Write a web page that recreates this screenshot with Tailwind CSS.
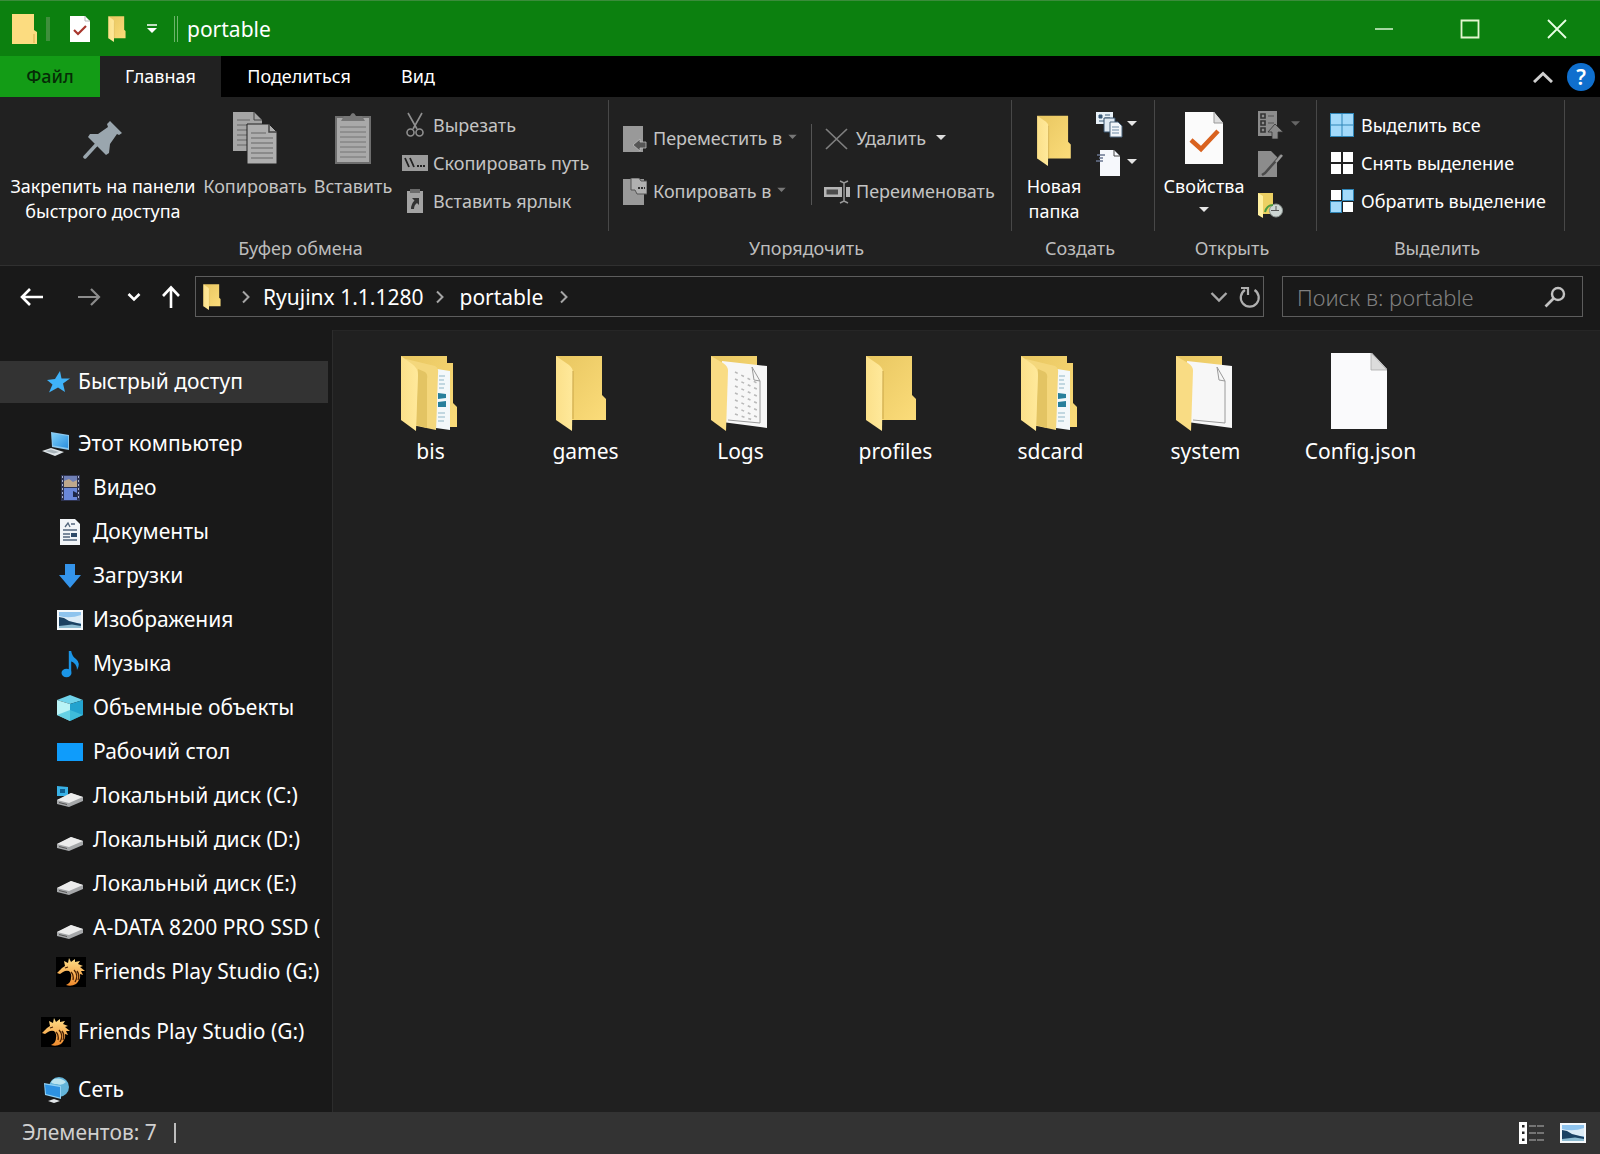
<!DOCTYPE html>
<html lang="ru">
<head>
<meta charset="utf-8">
<meta name="viewport" content="width=device-width, initial-scale=1">
<title>portable</title>
<script src="https://cdn.jsdelivr.net/npm/@tailwindcss/browser@4"></script>
</head>
<body class="flex min-h-screen flex-col overflow-x-hidden bg-[#191919] font-['Noto_Sans','Open_Sans',sans-serif] text-white">

<svg class="absolute h-0 w-0" aria-hidden="true">
  <defs>
    <linearGradient id="gBack" x1="0" y1="0" x2="1" y2="1"><stop offset="0" stop-color="#e8c660"/><stop offset="1" stop-color="#fbdc7a"/></linearGradient>
    <linearGradient id="gFront" x1="0" y1="0" x2="1" y2="0"><stop offset="0" stop-color="#fbe08a"/><stop offset="1" stop-color="#ffe99b"/></linearGradient>
    <linearGradient id="gBlue" x1="0" y1="0" x2="1" y2="1"><stop offset="0" stop-color="#7fd0f8"/><stop offset="1" stop-color="#2a8fe0"/></linearGradient>
    <linearGradient id="gDragon" x1="0" y1="0" x2="0" y2="1"><stop offset="0" stop-color="#ffe08a"/><stop offset="1" stop-color="#f08a2c"/></linearGradient>
  </defs>
  <symbol id="folder" viewBox="0 0 52 76">
    <path d="M1 1H47V40L51 44V65H1Z" fill="url(#gBack)"/>
    <path d="M1 1L14 10Q18 13 18 18L17 76L1 65Z" fill="url(#gFront)"/>
    <path d="M18 16V64" stroke="#c9a548" stroke-width="1"/>
  </symbol>
  <symbol id="folder-full" viewBox="0 0 58 76">
    <path d="M1 1H47V8H53V48L57 52V72H40L1 65Z" fill="url(#gBack)"/>
    <path d="M37 14L50 16V75L36 73Z" fill="#f3f8fa"/>
    <path d="M39 21h6M39 25h5M39 29h6M39 33h5M38 58h7M38 62h7M38 66h6" stroke="#8fb6c6" stroke-width="1.2"/>
    <path d="M38 38l8 1v4l-8 1zM38 47l8-1v6l-8 0z" fill="#277f9b"/>
    <path d="M6 4L35 11Q39 13 38 19L36 75L12 70Z" fill="#f4d77c"/>
    <path d="M18 14L25 17Q28 19 27 24V73L16 70Z" fill="#e3c463"/>
    <path d="M1 1L12 9Q18 13 18 20L16 76L1 65Z" fill="url(#gFront)"/>
  </symbol>
  <symbol id="folder-doc" viewBox="0 0 58 76">
    <path d="M1 1H47V60H1Z" fill="url(#gBack)"/>
    <path d="M12 6L57 11V73L12 67Z" fill="#f7f7f7"/>
    <path d="M42 12L50 26V68L18 65M42 12L44 25L50 26" fill="none" stroke="#9a9a9a" stroke-width="1"/>
    <path d="M1 1L13 8Q18 11 18 16L16 76L1 65Z" fill="#f9dc84"/>
  </symbol>
  <symbol id="folder-log" viewBox="0 0 58 76">
    <use href="#folder-doc"/>
    <path d="M25 17l24 12M25 24l22 10M25 31l22 10M25 38l22 10M25 45l22 10M25 52l22 10M25 59l18 6" stroke="#b9b9b9" stroke-width="1.6" stroke-dasharray="3 4"/>
  </symbol>
  <symbol id="file" viewBox="0 0 58 78">
    <path d="M1 1H42L57 17V77H1Z" fill="#fafafc"/><path d="M41 1V18H57Z" fill="#dcdcdc" stroke="#aaa" stroke-width=".8"/>
  </symbol>
  <symbol id="caret" viewBox="0 0 10 6"><path d="M0 1H10L5 6Z" fill="currentColor"/></symbol>
  <symbol id="chev-r" viewBox="0 0 10 14"><path d="M2 1.5L7.500 7L2 12.500" fill="none" stroke="currentColor" stroke-width="2"/></symbol>
  <symbol id="chev-d" viewBox="0 0 18 12"><path d="M1.500 2L9 9.500L16.500 2" fill="none" stroke="currentColor" stroke-width="2.400"/></symbol>
  <symbol id="drive" viewBox="0 0 28 22">
    <path d="M1 15L15 8L27 12V16L13 22L1 19Z" fill="#a5a7a9"/><path d="M1 15L15 8L27 12L13 18Z" fill="#ececec"/><path d="M3 17.500l8 2" stroke="#555" stroke-width="1"/>
  </symbol>
  <symbol id="dragon" viewBox="0 0 30 30">
    <path d="M0 0H30V30H0Z" fill="#000"/>
    <path d="M1 16L6 11L9 9L8 4L12 6L13 1L15 5L19 2L19 5L24 4L22 7L27 9L24 10L29 14L25 14L27 18L24 17Q25 22 20 27Q15 30 10 28Q15 26 15 21Q16 17 13 14Q10 13 7 15L4 17Z" fill="url(#gDragon)"/>
    <path d="M9 11l3-1M18 13q5 5 1 12M21 14q3 4 1 9M15 15q3 3 2 8" stroke="#4a2206" stroke-width="1.300" fill="none"/>
  </symbol>
  <symbol id="picture" viewBox="0 0 28 22">
    <path d="M1 1H27V21H1Z" fill="#f4f8fb"/><path d="M3 3H25V19H3Z" fill="#8fc4ee"/><path d="M3 7Q14 10 25 6V14L3 16Z" fill="#dcecf7"/><path d="M3 8L8 9L13 12L25 15V17H3Z" fill="#1b4263"/><path d="M3 17L16 15.500L25 17V19H3Z" fill="#8dbcd2"/>
  </symbol>
</svg>

<header class="flex h-14 items-center border-t border-[#3b8c3b] bg-[#0c800f]">
  <div class="flex flex-1 items-center pl-3">
    <svg class="h-[30px] w-[26px]" viewBox="0 0 26 30"><path d="M0 0H22V16L25 18V30H0Z" fill="#fcdc80"/><path d="M22 20V29" stroke="#d9b04c"/></svg>
    <span class="ml-2 h-6 w-1 bg-[#3f8f3c]"></span>
    <button type="button" class="ml-5 block" aria-label="Свойства"><svg class="h-[26px] w-5" viewBox="0 0 20 26"><path d="M0 0H15L20 5V26H0Z" fill="#fff"/><path d="M15 0V5H20" fill="none" stroke="#b5b5b5"/><path d="M4 14L8 18L16 10" fill="none" stroke="#a8352c" stroke-width="2.200"/></svg></button>
    <button type="button" class="ml-[18px] block" aria-label="Новая папка"><svg class="h-[26px] w-[18px]"><use href="#folder"/></svg></button>
    <button type="button" class="ml-5 block" aria-label="Настройка панели быстрого доступа"><svg class="h-3 w-3" viewBox="0 0 12 12"><path d="M1 2H11" stroke="#fff" stroke-width="1.500"/><path d="M1 5H11L6 10Z" fill="#fff"/></svg></button>
    <span class="ml-4 h-[26px] w-1 border-x border-[#6db56b]"></span>
    <h1 class="ml-[9px] text-[21px] leading-7">portable</h1>
  </div>
  <button type="button" class="flex h-full w-[87px] items-center justify-center" aria-label="Свернуть"><svg class="h-5 w-5" viewBox="0 0 20 20"><path d="M1 10H19" stroke="#d9f5d3" stroke-width="1.500"/></svg></button>
  <button type="button" class="flex h-full w-[86px] items-center justify-center" aria-label="Развернуть"><svg class="h-5 w-5" viewBox="0 0 20 20"><path d="M1.500 1.500H18.500V18.500H1.500Z" fill="none" stroke="#e3f5cf" stroke-width="1.800"/></svg></button>
  <button type="button" class="flex h-full w-[87px] items-center justify-center" aria-label="Закрыть"><svg class="h-5 w-5" viewBox="0 0 20 20"><path d="M1 1L19 19M19 1L1 19" stroke="#e8ffe4" stroke-width="1.800"/></svg></button>
</header>

<nav class="flex h-[41px] items-center bg-black text-[18px]" aria-label="Вкладки ленты">
  <button type="button" class="h-full w-[100px] bg-[#139c16] font-medium text-[#062b06]">Файл</button>
  <button type="button" class="h-full w-[121px] bg-[#212121]">Главная</button>
  <button type="button" class="h-full w-[156px]">Поделиться</button>
  <button type="button" class="h-full w-[82px]">Вид</button>
  <button type="button" class="ml-auto" aria-label="Свернуть ленту"><svg class="h-3 w-5" viewBox="0 0 20 12"><path d="M1 11L10 2.500L19 11" fill="none" stroke="#cfcfcf" stroke-width="3"/></svg></button>
  <button type="button" class="mr-[5px] ml-[14px] h-7 w-7 rounded-full bg-[#0f6fce] text-[21px] leading-7 font-semibold" aria-label="Справка">?</button>
</nav>

<section class="flex h-[169px] border-b border-[#303030] bg-[#212121] text-[18px] whitespace-nowrap" aria-label="Лента">
  <!-- Буфер обмена -->
  <div class="flex w-[609px] shrink-0 flex-col">
    <div class="mt-[3px] flex h-[131px] border-r border-[#484848] pl-2">
      <button type="button" class="flex w-[190px] flex-col items-center pt-3">
        <span class="flex h-14 items-center"><svg class="h-10 w-10" viewBox="0 0 40 40"><path d="M27 1L39 13L36 15L34 14L27 24L26 33L23 35L5 17L7 14L15 14L25 7L24 4Z" fill="#9aa6ae"/><path d="M13 25L2 37" stroke="#9aa6ae" stroke-width="3.500" stroke-linecap="round"/></svg></span>
        <span class="mt-[6px] leading-[25px]">Закрепить на панели<br>быстрого доступа</span>
      </button>
      <button type="button" class="flex w-[114px] flex-col items-center pt-3 text-[#c4c4c4]">
        <span class="flex h-14 items-center pb-1"><svg class="h-[52px] w-11" viewBox="0 0 44 52"><path d="M0 0H21L29 8V39H0Z" fill="#a5a5a5"/><path d="M21 0V8H29" fill="none" stroke="#444"/><path d="M4 8H17M4 13H25M4 18H25M4 23H25M4 28H25M4 33H25" stroke="#666"/><path d="M14 12H36L44 20V52H14Z" fill="#aeaeae" stroke="#212121"/><path d="M36 12V20H44" fill="none" stroke="#444" stroke-width="1.500"/><path d="M18 21H33M18 26H40M18 31H40M18 36H40M18 41H40M18 46H40" stroke="#666"/></svg></span>
        <span class="mt-[6px] leading-[25px]">Копировать</span>
      </button>
      <button type="button" class="flex w-[82px] flex-col items-center pt-3 text-[#c4c4c4]">
        <span class="flex h-14 items-center pb-1"><svg class="h-[52px] w-9" viewBox="0 0 36 52"><path d="M1 5H35V51H1Z" fill="#a9a9a9" stroke="#6e6e6e" stroke-width="2"/><path d="M6 9L9 4H15Q18 -2 21 4H27L30 9Z" fill="#777"/><path d="M5 15H31M5 20H31M5 25H31M5 30H31M5 35H31M5 40H31M5 45H31" stroke="#757575"/></svg></span>
        <span class="mt-[6px] leading-[25px]">Вставить</span>
      </button>
      <div class="flex flex-col pt-[6px] pl-2 text-[#c4c4c4]">
        <button type="button" class="flex h-[38px] items-center gap-[5px]"><svg class="h-[26px] w-[26px]" viewBox="0 0 26 26" fill="none" stroke="#8f8f8f" stroke-width="1.600"><path d="M6 1L15 17M20 1L11 17"/><circle cx="8.500" cy="20.500" r="3.500"/><circle cx="17.500" cy="20.500" r="3.500"/></svg>Вырезать</button>
        <button type="button" class="flex h-[38px] items-center gap-[5px]"><svg class="h-4 w-[26px]" viewBox="0 0 26 16"><path d="M0 0H26V16H0Z" fill="#9b9b9b"/><path d="M3 3L7 12M8 3L12 12" stroke="#222" stroke-width="1.800"/><path d="M15 11H23" stroke="#222" stroke-width="2" stroke-dasharray="2 1"/></svg>Скопировать путь</button>
        <button type="button" class="flex h-[38px] items-center gap-[5px]"><svg class="h-6 w-[26px]" viewBox="0 0 26 24"><path d="M5 2H21V24H5Z" fill="#a3a3a3"/><path d="M8 0H18V4H8Z" fill="#6b6b6b"/><path d="M10 9H17V16L15 14Q12 16 12 20H9Q9 15 12.500 11.500Z" fill="#333"/></svg>Вставить ярлык</button>
      </div>
    </div>
    <h2 class="pr-2 text-center leading-[34px] text-[#bdbdbd]">Буфер обмена</h2>
  </div>
  <!-- Упорядочить -->
  <div class="flex w-[403px] shrink-0 flex-col">
    <div class="mt-[3px] flex h-[131px] border-r border-[#484848] pt-3 pl-[14px] text-[#c4c4c4]">
      <div class="flex w-[188px] shrink-0 flex-col">
        <button type="button" class="flex h-[53px] items-center gap-[6px]"><svg class="h-[26px] w-6" viewBox="0 0 24 26"><path d="M0 0H20V26H0Z" fill="#999"/><path d="M10 19L17 13V16H23V22H17V25Z" fill="#555" stroke="#bbb" stroke-width=".8"/></svg>Переместить в<svg class="mb-1 h-[5px] w-[9px] text-[#777]"><use href="#caret"/></svg></button>
        <button type="button" class="flex h-[53px] items-center gap-[6px]"><svg class="h-[27px] w-6" viewBox="0 0 24 27"><path d="M0 1H21V27H0Z" fill="#999"/><path d="M8 0H16L18 3H24V16H14L12 12H8Z" fill="#b0b0b0" stroke="#555"/><path d="M15 10H22" stroke="#333" stroke-width="2" stroke-dasharray="2 1"/></svg>Копировать в<svg class="mb-1 h-[5px] w-[9px] text-[#777]"><use href="#caret"/></svg></button>
      </div>
      <div class="mt-3 h-[81px] w-px bg-[#555]"></div>
      <div class="flex flex-col pl-3">
        <button type="button" class="flex h-[53px] items-center gap-[6px]"><svg class="h-[22px] w-[26px]" viewBox="0 0 26 22"><path d="M2 1L23 21M23 1L2 21" stroke="#7f7f7f" stroke-width="1.700"/></svg>Удалить<svg class="mb-1 ml-1 h-[6px] w-[10px] text-[#ddd]"><use href="#caret"/></svg></button>
        <button type="button" class="flex h-[53px] items-center gap-[6px]"><svg class="h-6 w-[26px]" viewBox="0 0 26 24"><path d="M0 7H18V17H0Z" fill="#b5b5b5"/><path d="M2.500 9.500H14V14.500H2.500Z" fill="#4d4d4d"/><path d="M22 7H26V17H22Z" fill="#b5b5b5"/><path d="M16 1L20 3L24 1M20 3V21M16 23L20 21L24 23" fill="none" stroke="#999" stroke-width="1.500"/></svg>Переименовать</button>
      </div>
    </div>
    <h2 class="pr-2 text-center leading-[34px] text-[#bdbdbd]">Упорядочить</h2>
  </div>
  <!-- Создать -->
  <div class="flex w-[143px] shrink-0 flex-col">
    <div class="mt-[3px] flex h-[131px] border-r border-[#484848]">
      <button type="button" class="flex w-[84px] flex-col items-center pt-3">
        <span class="flex h-14 items-center"><svg class="h-[51px] w-9"><use href="#folder"/></svg></span>
        <span class="mt-[6px] leading-[25px]">Новая<br>папка</span>
      </button>
      <div class="flex flex-col pt-[6px]">
        <button type="button" class="flex h-[38px] items-center gap-1" aria-label="Создать элемент"><svg class="h-[26px] w-[27px]" viewBox="0 0 27 26"><path d="M0 0H17V12H0Z" fill="#e8f1f8"/><path d="M3 3h3v3h-3zM9 3h5M9 6h5M3 9h9" stroke="#3b5a78" fill="#3b5a78"/><path d="M8 6H19V20H8Z" fill="#dfe9f2" stroke="#35516b"/><path d="M14 10H22L26 14V25H14Z" fill="#f2f6fa" stroke="#4b657d"/><path d="M16 15h7M16 18h7M16 21h7" stroke="#6f8ba5"/></svg><svg class="mb-1 h-[6px] w-[10px] text-[#e5e5e5]"><use href="#caret"/></svg></button>
        <button type="button" class="flex h-[38px] items-center gap-1" aria-label="Простой доступ"><svg class="h-[26px] w-[27px]" viewBox="0 0 27 26"><path d="M4 0H18L24 6V26H4Z" fill="#f6f8fc"/><path d="M18 0V6H24" fill="none" stroke="#444"/><path d="M1 5H9M3 8H7M0 11H7" stroke="#6a7590" stroke-width="1.500"/></svg><svg class="mb-1 h-[6px] w-[10px] text-[#e5e5e5]"><use href="#caret"/></svg></button>
      </div>
    </div>
    <h2 class="pl-px text-center leading-[34px] text-[#bdbdbd] pr-2">Создать</h2>
  </div>
  <!-- Открыть -->
  <div class="flex w-[162px] shrink-0 flex-col">
    <div class="mt-[3px] flex h-[131px] border-r border-[#484848]">
      <button type="button" class="flex w-[98px] flex-col items-center pt-3">
        <span class="flex h-14 items-center pb-1"><svg class="h-[52px] w-10" viewBox="0 0 40 52"><path d="M1 0H30L39 11V52H1Z" fill="#fbfbfb"/><path d="M30 0V11H39" fill="#ddd" stroke="#999"/><path d="M7 28L17 37L34 19" fill="none" stroke="#d9621f" stroke-width="4.500"/></svg></span>
        <span class="mt-[6px] leading-[25px]">Свойства</span>
        <svg class="mt-[7px] h-[6px] w-[10px] text-[#e5e5e5]"><use href="#caret"/></svg>
      </button>
      <div class="flex flex-col pt-[6px] pl-1">
        <button type="button" class="flex h-[38px] items-center gap-2" aria-label="Открыть"><svg class="h-7 w-[26px]" viewBox="0 0 26 28"><path d="M1 0H20V25H1Z" fill="#8c8c8c"/><path d="M4 3h4v4h-4zM4 10h4v4h-4zM4 17h4v4h-4z" fill="#8c8c8c" stroke="#333" stroke-width="1.600"/><path d="M11 5h6M11 12h6" stroke="#555"/><path d="M18 13L26 21H21V28H15V21H11Z" fill="#8a8a8a" stroke="#333" stroke-width=".8"/></svg><svg class="mb-1 h-[6px] w-[9px] text-[#666]"><use href="#caret"/></svg></button>
        <button type="button" class="flex h-10 items-center" aria-label="Изменить"><svg class="h-[26px] w-[26px]" viewBox="0 0 26 26"><path d="M1 0H14L20 6V26H1Z" fill="#8c8c8c"/><path d="M24 4L8 22L5 24" fill="none" stroke="#4a4a4a" stroke-width="2.500"/><path d="M25 4L19 11" stroke="#999" stroke-width="2.500"/></svg></button>
        <button type="button" class="flex h-[42px] items-center" aria-label="Журнал"><svg class="h-[26px] w-[26px]" viewBox="0 0 26 26"><path d="M1 1H16V22H1Z" fill="#ecd062"/><path d="M1 1L6 4V26L1 23Z" fill="#fff0a0"/><circle cx="19" cy="18.500" r="6.500" fill="#cdd6d3" stroke="#8e9794"/><path d="M14 18.500H22M19 14V19" stroke="#555"/><path d="M8 20Q10 13 16 13" fill="none" stroke="#4b9b3f" stroke-width="2"/></svg></button>
      </div>
    </div>
    <h2 class="pr-2 text-center leading-[34px] text-[#bdbdbd]">Открыть</h2>
  </div>
  <!-- Выделить -->
  <div class="flex w-[248px] shrink-0 flex-col">
    <div class="mt-[3px] flex h-[131px] flex-col border-r border-[#484848] pt-[6px] pl-[13px]">
      <button type="button" class="flex h-[38px] items-center gap-[7px]"><svg class="h-6 w-6" viewBox="0 0 24 24"><path d="M0 0H24V24H0Z" fill="#2f86b8"/><path d="M1 1H11.500V11.500H1ZM12.500 1H23V11.500H12.500ZM1 12.500H11.500V23H1ZM12.500 12.500H23V23H12.500Z" fill="#a3dafa"/></svg>Выделить все</button>
      <button type="button" class="flex h-[38px] items-center gap-[7px]"><svg class="h-6 w-6" viewBox="0 0 24 24"><path d="M1 1H11V11H1ZM13 1H23V11H13ZM1 13H11V23H1ZM13 13H23V23H13Z" fill="#fff"/></svg>Снять выделение</button>
      <button type="button" class="flex h-[38px] items-center gap-[7px]"><svg class="h-6 w-6" viewBox="0 0 24 24"><path d="M12 0H24V12H12ZM0 12H12V24H0Z" fill="#2f86b8"/><path d="M13 1H23V11H13ZM1 13H11V23H1Z" fill="#a3dafa"/><path d="M1 1H11V11H1ZM13 13H23V23H13Z" fill="#fff"/></svg>Обратить выделение</button>
    </div>
    <h2 class="pr-2 text-center leading-[34px] text-[#bdbdbd]">Выделить</h2>
  </div>
</section>

<div class="flex h-16 items-center bg-[#191919] pr-[17px] pb-[3px]">
  <button type="button" class="flex w-16 justify-center" aria-label="Назад"><svg class="h-5 w-6" viewBox="0 0 24 20"><path d="M23 10H3M10 2L2 10L10 18" fill="none" stroke="#fff" stroke-width="2.600"/></svg></button>
  <button type="button" class="flex w-[50px] justify-center" aria-label="Вперед"><svg class="h-5 w-6" viewBox="0 0 24 20"><path d="M1 10H21M14 2L22 10L14 18" fill="none" stroke="#8c8c8c" stroke-width="2.200"/></svg></button>
  <button type="button" class="flex w-10 justify-center" aria-label="Последние расположения"><svg class="h-[10px] w-[14px]" viewBox="0 0 14 10"><path d="M1.500 2L7 7.500L12.500 2" fill="none" stroke="#fff" stroke-width="2.600"/></svg></button>
  <button type="button" class="flex w-[34px] justify-center" aria-label="Вверх"><svg class="h-6 w-5" viewBox="0 0 20 24"><path d="M10 23V3M2 11L10 2.500L18 11" fill="none" stroke="#fff" stroke-width="2.600"/></svg></button>
  <div class="ml-[7px] flex h-[41px] flex-1 items-center border border-[#5d5d5d] pr-[2px] pl-[7px] text-[21px] leading-7">
    <svg class="h-[26px] w-[18px]"><use href="#folder"/></svg>
    <svg class="ml-5 h-[14px] w-[10px] text-[#a5a5a5]"><use href="#chev-r"/></svg>
    <a href="#" class="ml-3">Ryujinx 1.1.1280</a>
    <svg class="ml-3 h-[14px] w-[10px] text-[#a5a5a5]"><use href="#chev-r"/></svg>
    <a href="#" class="ml-[14px]">portable</a>
    <svg class="ml-4 h-[14px] w-[10px] text-[#a5a5a5]"><use href="#chev-r"/></svg>
    <button type="button" class="ml-auto" aria-label="Предыдущие расположения"><svg class="h-3 w-[18px] text-[#a8a8a8]"><use href="#chev-d"/></svg></button>
    <button type="button" class="ml-[11px]" aria-label="Обновить"><svg class="h-[22px] w-[22px]" viewBox="0 0 22 22"><path d="M15.500 4A9 9 0 1 1 6 4" fill="none" stroke="#b0b0b0" stroke-width="2.200"/><path d="M2 2H9V9" fill="none" stroke="#b0b0b0" stroke-width="2.200"/></svg></button>
  </div>
  <label class="ml-[18px] flex h-[41px] w-[301px] items-center border border-[#5d5d5d] pr-4 pl-[14px]">
    <input type="search" aria-label="Поиск" placeholder="Поиск в: portable" class="min-w-0 flex-1 bg-transparent text-[22px] font-light leading-7 outline-none placeholder:text-[#808080]">
    <svg class="h-[22px] w-[22px]" viewBox="0 0 22 22"><circle cx="14" cy="8" r="6" fill="none" stroke="#c2c2c2" stroke-width="2.400"/><path d="M9.500 12.500L1.500 20.500" stroke="#c2c2c2" stroke-width="2.600"/></svg>
  </label>
</div>

<main class="flex flex-1">
  <aside class="w-[333px] shrink-0 overflow-hidden border-r border-[#2c2c2c] pt-[31px] text-[21px] whitespace-nowrap">
    <ul>
      <li class="mb-[19px] flex h-[42px] w-[328px] items-center bg-[#333] pl-[46px]"><a href="#" class="flex items-center gap-2"><svg class="h-6 w-6" viewBox="0 0 24 24"><path d="M14 1L15.500 8.500L24 8.500L17 13.500L19 22L12 17.500L3 22.500L6.500 14.500L1 10L9 9Z" fill="#3fb2f8"/></svg>Быстрый доступ</a></li>
      <li class="flex h-11 items-center pl-[42px]"><a href="#" class="flex items-center gap-2"><svg class="h-[26px] w-7" viewBox="0 0 28 26"><path d="M9 1L27 4V19L10 16Z" fill="#8cc8ee"/><path d="M10 2.500L26 5V17L11 14.500Z" fill="url(#gBlue)"/><path d="M0 20L9 17L22 21L13 25Z" fill="#dfe5e8"/><path d="M3 20L9 18.500L17 21L12 22.500Z" fill="#a9b4ba"/></svg>Этот компьютер</a></li>
      <li class="flex h-11 items-center pl-14"><a href="#" class="flex items-center gap-[9px]"><svg class="h-[26px] w-7" viewBox="0 0 28 26"><path d="M5 0H24V26H5Z" fill="#2e3350"/><path d="M8 1H21V12H8Z" fill="#6f7fb5"/><path d="M8 13H21V25H8Z" fill="#6a87d8"/><path d="M8 6L13 4L17 7L21 5V12H8Z" fill="#bfa88d"/><path d="M17 16l4 2v4h-4z" fill="#1d2746"/><path d="M6.500 1V25M22.500 1V25" stroke="#aab3d0" stroke-dasharray="2 2"/></svg>Видео</a></li>
      <li class="flex h-11 items-center pl-14"><a href="#" class="flex items-center gap-[9px]"><svg class="h-[26px] w-7" viewBox="0 0 28 26"><path d="M4 0H19L24 5V26H4Z" fill="#f2f5f8"/><path d="M9 8l3-4 2 4M15 5h4M7 11h14M7 15h7M7 18h7M7 21h14" stroke="#53667c" stroke-width="1.300" fill="none"/><path d="M15 14H21V18H15Z" fill="#2e4a68"/></svg>Документы</a></li>
      <li class="flex h-11 items-center pl-14"><a href="#" class="flex items-center gap-[9px]"><svg class="h-[26px] w-7" viewBox="0 0 28 26"><path d="M9 1H19V12H25L14 25L3 12H9Z" fill="#3494ea"/></svg>Загрузки</a></li>
      <li class="flex h-11 items-center pl-14"><a href="#" class="flex items-center gap-[9px]"><svg class="h-[22px] w-7"><use href="#picture"/></svg>Изображения</a></li>
      <li class="flex h-11 items-center pl-14"><a href="#" class="flex items-center gap-[9px]"><svg class="h-[28px] w-7" viewBox="0 0 28 28"><path d="M14 1V22" stroke="#1b95e6" stroke-width="2.400"/><path d="M13 1H15Q16 6 20 9Q25 13 21 20Q21 13 14 11Z" fill="#1b95e6"/><ellipse cx="10.500" cy="23" rx="5" ry="4.200" fill="#1b95e6"/></svg>Музыка</a></li>
      <li class="flex h-11 items-center pl-14"><a href="#" class="flex items-center gap-[9px]"><svg class="h-[26px] w-7" viewBox="0 0 28 26"><path d="M14 0L27 5L14 9L1 5Z" fill="#6fd3ea"/><path d="M1 5L14 9V26L1 20Z" fill="#b9f3f6"/><path d="M27 5L14 9V26L27 20Z" fill="#23a3cf"/><path d="M14 15L27 20L14 26L1 20Z" fill="#49c4dd" opacity=".75"/></svg>Объемные объекты</a></li>
      <li class="flex h-11 items-center pl-14"><a href="#" class="flex items-center gap-[9px]"><svg class="h-5 w-7" viewBox="0 0 28 20"><path d="M1 1H27V19H1Z" fill="#0f9cfb"/></svg>Рабочий стол</a></li>
      <li class="flex h-11 items-center pl-14"><a href="#" class="flex items-center gap-[9px]"><svg class="h-[22px] w-7" viewBox="0 0 28 22"><path d="M1 1L12 2V11L1 11Z" fill="#38b1e6"/><path d="M4 4h5v4h-5z" fill="#0d5f92"/><use href="#drive"/></svg>Локальный диск (C:)</a></li>
      <li class="flex h-11 items-center pl-14"><a href="#" class="flex items-center gap-[9px]"><svg class="h-[22px] w-7"><use href="#drive"/></svg>Локальный диск (D:)</a></li>
      <li class="flex h-11 items-center pl-14"><a href="#" class="flex items-center gap-[9px]"><svg class="h-[22px] w-7"><use href="#drive"/></svg>Локальный диск (E:)</a></li>
      <li class="flex h-11 items-center pl-14"><a href="#" class="flex items-center gap-[9px]"><svg class="h-[22px] w-7"><use href="#drive"/></svg>A-DATA 8200 PRO SSD (</a></li>
      <li class="flex h-11 items-center pl-14"><a href="#" class="flex items-center gap-[7px]"><svg class="h-[30px] w-[30px]"><use href="#dragon"/></svg>Friends Play Studio (G:)</a></li>
      <li class="mt-4 flex h-11 items-center pl-[41px]"><a href="#" class="flex items-center gap-[7px]"><svg class="h-[30px] w-[30px]"><use href="#dragon"/></svg>Friends Play Studio (G:)</a></li>
      <li class="mt-[14px] flex h-11 items-center pl-[42px]"><a href="#" class="flex items-center gap-2"><svg class="h-7 w-7" viewBox="0 0 28 28"><circle cx="17" cy="11" r="10" fill="#63b4d9"/><path d="M12 3Q19 1 24 6Q20 10 15 8Q10 8 9 6Z" fill="#b9e3ef"/><path d="M2 7L19 10V23L3 19Z" fill="#8fd0f5"/><path d="M3 8.500L18 11V21.500L4 18Z" fill="#2d92e2"/><path d="M6 25L12 23L18 25L12 27Z" fill="#e2e6e8"/></svg>Сеть</a></li>
    </ul>
  </aside>
  <section class="flex-1 border-t border-[#262626] bg-[#202020] pt-5 pl-5" aria-label="Файлы">
    <ul class="flex flex-wrap text-[21px] leading-7">
      <li class="flex w-[155px] flex-col items-center"><span class="mb-[2px] flex h-[84px] items-center pr-1"><svg class="h-[76px] w-[58px]"><use href="#folder-full"/></svg></span>bis</li>
      <li class="flex w-[155px] flex-col items-center"><span class="mb-[2px] flex h-[84px] items-center pr-[10px]"><svg class="h-[76px] w-[52px]"><use href="#folder"/></svg></span>games</li>
      <li class="flex w-[155px] flex-col items-center"><span class="mb-[2px] flex h-[84px] items-center pr-1"><svg class="h-[76px] w-[58px]"><use href="#folder-log"/></svg></span>Logs</li>
      <li class="flex w-[155px] flex-col items-center"><span class="mb-[2px] flex h-[84px] items-center pr-[10px]"><svg class="h-[76px] w-[52px]"><use href="#folder"/></svg></span>profiles</li>
      <li class="flex w-[155px] flex-col items-center"><span class="mb-[2px] flex h-[84px] items-center pr-1"><svg class="h-[76px] w-[58px]"><use href="#folder-full"/></svg></span>sdcard</li>
      <li class="flex w-[155px] flex-col items-center"><span class="mb-[2px] flex h-[84px] items-center pr-1"><svg class="h-[76px] w-[58px]"><use href="#folder-doc"/></svg></span>system</li>
      <li class="flex w-[155px] flex-col items-center"><span class="mb-[2px] flex h-[84px] items-center pr-1 pb-1"><svg class="h-[78px] w-[58px]"><use href="#file"/></svg></span>Config.json</li>
    </ul>
  </section>
</main>

<footer class="flex h-[42px] items-center bg-[#333] pr-[13px] pl-[22px] text-[21px] text-[#d0d0d0]">
  <span>Элементов: 7</span>
  <span class="ml-[17px] h-5 w-[2px] bg-[#bdbdbd]"></span>
  <button type="button" class="ml-auto" aria-label="Таблица"><svg class="h-[22px] w-[26px]" viewBox="0 0 26 22"><path d="M0 0H8V22H0Z" fill="#fff"/><path d="M3 3h2.500v2.500h-2.500zM3 9.500h2.500v2.500h-2.500zM3 16.500h2.500v2.500h-2.500z" fill="#222"/><path d="M10 4H26M10 11H26M10 18H26" stroke="#8a8a8a" stroke-width="1.500" stroke-dasharray="7 1"/></svg></button>
  <button type="button" class="ml-[14px]" aria-label="Крупные значки"><svg class="h-[22px] w-7"><use href="#picture"/></svg></button>
</footer>
</body>
</html>
